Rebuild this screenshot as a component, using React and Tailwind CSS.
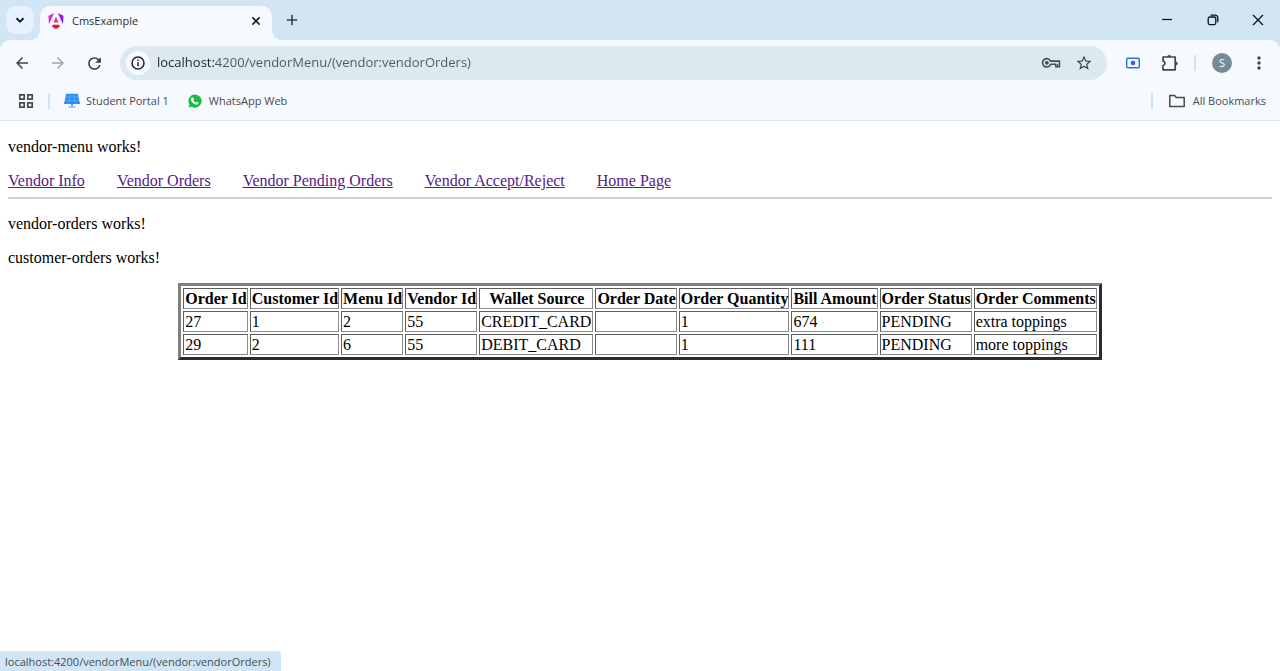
import React from "react";
import { MdArrowBack, MdArrowForward, MdRefresh, MdStarBorder, MdMoreVert } from "react-icons/md";

const links = ["Vendor Info", "Vendor Orders", "Vendor Pending Orders", "Vendor Accept/Reject", "Home Page"];

const columns = [
  "Order Id", "Customer Id", "Menu Id", "Vendor Id", "Wallet Source",
  "Order Date", "Order Quantity", "Bill Amount", "Order Status", "Order Comments",
];

const orders = [
  ["27", "1", "2", "55", "CREDIT_CARD", "", "1", "674", "PENDING", "extra toppings"],
  ["29", "2", "6", "55", "DEBIT_CARD", "", "1", "111", "PENDING", "more toppings"],
];

function AngularLogo() {
  return (
    <svg className="size-4" viewBox="0 0 223 236" aria-hidden="true">
      <defs>
        <linearGradient id="right" x1="0" y1="0" x2="1" y2="1">
          <stop offset="0" stopColor="#b01ff0" />
          <stop offset="1" stopColor="#7a1bee" />
        </linearGradient>
        <linearGradient id="left" x1="0" y1="0" x2="0" y2="1">
          <stop offset="0" stopColor="#c93fe0" />
          <stop offset="1" stopColor="#f0209a" />
        </linearGradient>
      </defs>
      <path fill="url(#right)" d="m222.077 39.192-8.019 125.923L137.387 0l84.69 39.192Z" />
      <path fill="#e4123f" d="m168.972 202.017-57.933 33.056-57.934-33.056 11.783-28.556h92.301l11.783 28.556Z" />
      <path fill="#f0308f" d="m111.039 52 36 88H75l36-88Z" />
      <path fill="url(#left)" d="M7.937 165.115 0 39.192 84.69 0 7.937 165.115Z" />
    </svg>
  );
}

function ChevronIcon() {
  return (
    <svg className="size-4" viewBox="0 0 16 16" fill="none" stroke="#1c2226" strokeWidth="2" aria-hidden="true">
      <path d="m4.5 6.2 3.5 3.5 3.5-3.5" />
    </svg>
  );
}

function CrossIcon() {
  return (
    <svg className="size-4" viewBox="0 0 16 16" fill="none" stroke="#1c2226" strokeWidth="1.7" aria-hidden="true">
      <path d="m4.4 4.4 7.2 7.2m0-7.2-7.2 7.2" />
    </svg>
  );
}

function PlusIcon() {
  return (
    <svg className="size-4" viewBox="0 0 16 16" fill="none" stroke="#37434a" strokeWidth="1.6" aria-hidden="true">
      <path d="M8 2.8v10.4M2.8 8h10.4" />
    </svg>
  );
}

function InfoIcon() {
  return (
    <svg className="size-4" viewBox="0 0 16 16" fill="none" stroke="#1f2427" strokeWidth="1.5" aria-hidden="true">
      <circle cx="8" cy="8" r="6" />
      <path d="M8 7.2v4M8 4.6v1.500" />
    </svg>
  );
}

function KeyIcon() {
  return (
    <svg className="size-5" viewBox="0 0 20 20" fill="none" stroke="#454c50" strokeWidth="1.6" aria-hidden="true">
      <path d="M9.600 8.100h8.800v5.700h-3.600v-2.500H9.700a4.200 4.200 0 1 1-.1-3.200Z" strokeLinejoin="round" />
      <circle cx="5.900" cy="9.800" r="1.900" fill="#454c50" stroke="none" />
      <path d="M16.600 11v2.800" strokeWidth="1" />
    </svg>
  );
}

function CameraIcon() {
  return (
    <svg className="size-4" viewBox="0 0 16 16" aria-hidden="true">
      <rect x="1.7" y="3.2" width="12.6" height="9.6" rx="1.3" fill="#f2f8ff" stroke="#2b71dc" strokeWidth="1.4" />
      <circle cx="8" cy="8" r="2.3" fill="#4c4fd0" />
    </svg>
  );
}

function PuzzleIcon() {
  return (
    <svg className="size-5" viewBox="0 0 20 20" aria-hidden="true">
      <path
        d="M3 4h12.2v12.8H3v-4.2a2.4 2.4 0 0 0 0-4.7Z"
        fill="none" stroke="#3f464b" strokeWidth="1.7" strokeLinejoin="round"
      />
      <path d="M7.2 4a2 2 0 0 1 4 0ZM15.6 8.4a2 2 0 0 1 0 4Z" fill="#3f464b" />
    </svg>
  );
}

function GridIcon() {
  return (
    <svg className="size-4" viewBox="0 0 16 16" fill="none" stroke="#454b50" strokeWidth="1.7" aria-hidden="true">
      <path d="M1.8 1.8h4.4v4.4H1.8zM9.8 1.8h4.4v4.4H9.8zM1.8 9.8h4.4v4.4H1.8zM9.8 9.8h4.4v4.4H9.8z" />
    </svg>
  );
}

function SolarIcon() {
  return (
    <svg className="size-4" viewBox="0 0 16 16" aria-hidden="true">
      <path d="M2.200.8h11.600L16 11H0Z" fill="#2b8cf7" />
      <path d="M1.600 4h12.800M.9 7.400h14.200M5.800 1l-.7 9.800M10.200 1l.7 9.800" stroke="#74b5fb" strokeWidth=".6" />
      <path d="M7 11h2v2.500H7z" fill="#55a5f7" />
      <path d="M4.500 13.200h7v1.600h-7z" fill="#8cc4fb" />
    </svg>
  );
}

function WhatsAppIcon() {
  return (
    <svg className="size-4" viewBox="-0.5 -0.5 17 17" aria-hidden="true">
      <path d="M8 1a7 7 0 1 1-3.4 13.1L1.2 15l.9-3.4A7 7 0 0 1 8 1Z" fill="#17bd45" />
      <path
        d="M5.2 4.3h.9l.8 1.9-.7.9c.6 1.2 1.4 2 2.7 2.6l.9-.8 1.9.9c.1 1.2-.8 2-2 2-3 0-6-2.900-6-5.600 0-1 .6-1.700 1.500-1.900Z"
        fill="#fff"
      />
    </svg>
  );
}

function FolderIcon() {
  return (
    <svg className="size-5" viewBox="0 0 20 20" fill="none" stroke="#454b50" strokeWidth="1.5" aria-hidden="true">
      <path d="M2.800 4.600h4.800l1.700 1.900h7.900v8.900H2.800Z" strokeLinejoin="round" />
    </svg>
  );
}

function TabStrip() {
  return (
    <header className="flex h-10 items-end bg-[#d2e5f4]">
      <button aria-label="Search tabs" className="mb-1.5 ml-1.5 flex size-7 items-center justify-center rounded-[10px] bg-[#e5f2fd]">
        <ChevronIcon />
      </button>
      <div className="relative ml-1.5 flex h-[34px] w-58 items-center rounded-t-[10px] bg-[#f6f9fe] px-2 pb-1">
        <span className="absolute bottom-0 -left-2.5 size-2.5 bg-[radial-gradient(circle_at_0_0,transparent_10px,#f6f9fe_10px)]" />
        <span className="absolute -right-2.5 bottom-0 size-2.5 bg-[radial-gradient(circle_at_100%_0,transparent_10px,#f6f9fe_10px)]" />
        <AngularLogo />
        <span className="ml-2 flex-1 text-[11px] text-[#2a2f33]">CmsExample</span>
        <button aria-label="Close tab"><CrossIcon /></button>
      </div>
      <button aria-label="New tab" className="mb-3 ml-3"><PlusIcon /></button>
      <div className="mb-1 ml-auto flex h-8 items-center">
        <button aria-label="Minimize" className="flex w-[46px] justify-center">
          <svg className="size-4" viewBox="0 0 16 16" stroke="#111" strokeWidth="1.200" aria-hidden="true"><path d="M3 7.500h10" /></svg>
        </button>
        <button aria-label="Restore" className="flex w-[46px] justify-center">
          <svg className="size-4" viewBox="0 0 16 16" fill="none" stroke="#111" strokeWidth="1.300" aria-hidden="true">
            <rect x="3.200" y="5" width="7.600" height="7.600" rx="1.500" />
            <path d="M5.500 3.200h4.800a2.500 2.500 0 0 1 2.500 2.500v4.600" />
          </svg>
        </button>
        <button aria-label="Close window" className="flex w-11 justify-center">
          <svg className="size-4" viewBox="0 0 16 16" stroke="#111" strokeWidth="1.300" aria-hidden="true"><path d="m3 3 10 10M13 3 3 13" /></svg>
        </button>
      </div>
    </header>
  );
}

function Toolbar() {
  return (
    <div className="flex h-[46px] items-center pr-[11px] pl-1">
      <button aria-label="Back" className="flex w-9 justify-center text-[#3d464b]"><MdArrowBack size={18} /></button>
      <button aria-label="Forward" className="flex w-9 justify-center text-[#a0a6aa]"><MdArrowForward size={18} /></button>
      <button aria-label="Reload" className="flex w-9 justify-center text-[#353d42]"><MdRefresh size={19} /></button>
      <div className="ml-2 flex h-[34px] flex-1 items-center rounded-full bg-[#dde9f1] pl-1.5 pr-3.5">
        <button aria-label="Site information" className="flex size-6 items-center justify-center rounded-full bg-[#f6f9fe]"><InfoIcon /></button>
        <input
          aria-label="Address"
          defaultValue="localhost:4200/vendorMenu/(vendor:vendorOrders)"
          className="ml-[7px] min-w-0 flex-1 bg-[linear-gradient(to_right,#1f2427_58px,#4d565b_58px)] bg-clip-text text-[13px] text-transparent outline-none"
        />
        <button aria-label="Passwords"><KeyIcon /></button>
        <button aria-label="Bookmark this page" className="ml-3.5 text-[#3f464b]"><MdStarBorder size={18} /></button>
      </div>
      <button aria-label="Screen recorder" className="ml-[18px]"><CameraIcon /></button>
      <button aria-label="Extensions" className="ml-[19px]"><PuzzleIcon /></button>
      <span className="ml-3.5 h-4 w-0.5 bg-[#cfe4f5]" />
      <button aria-label="Profile" className="ml-4 flex size-5 items-center justify-center rounded-full bg-[#748c98] text-[11px] text-white">S</button>
      <button aria-label="Menu" className="ml-[17px] text-[#3f464b]"><MdMoreVert size={20} /></button>
    </div>
  );
}

function BookmarksBar() {
  return (
    <nav aria-label="Bookmarks" className="flex h-[35px] items-center border-b border-[#dfe6ea] pr-3.5 pb-1 pl-[18px] text-[11px] text-[#454c51]">
      <button aria-label="Apps"><GridIcon /></button>
      <span className="ml-3.5 h-4 w-0.5 bg-[#cfe4f5]" />
      <a href="#portal" className="ml-3.5 flex items-center gap-1.5"><SolarIcon />Student Portal 1</a>
      <a href="#whatsapp" className="ml-[18px] flex items-center gap-1.5"><WhatsAppIcon />WhatsApp Web</a>
      <span className="ml-auto h-4 w-0.5 bg-[#cfe4f5]" />
      <button className="ml-3.5 flex items-center gap-1.5"><FolderIcon />All Bookmarks</button>
    </nav>
  );
}

const cellBorder = "border border-t-[#5c5c5c] border-r-[#8a8a8a] border-b-[#8a8a8a] border-l-[#5c5c5c]";

function OrdersTable() {
  return (
    <table className="mx-auto mt-4 border-separate border-spacing-0.5 border-3 border-[gray] [border-style:outset]">
      <thead>
        <tr>
          {columns.map((name) => (
            <th key={name} scope="col" className={`${cellBorder} h-[21px] py-px pl-px text-center leading-[17px] font-bold whitespace-nowrap`}>{name}</th>
          ))}
        </tr>
      </thead>
      <tbody>
        {orders.map((row) => (
          <tr key={row[0]}>
            {row.map((value, i) => (
              <td key={columns[i]} className={`${cellBorder} h-[21px] p-px leading-[17px] whitespace-nowrap`}>{value}</td>
            ))}
          </tr>
        ))}
      </tbody>
    </table>
  );
}

export default function App() {
  return (
    <div className="min-h-screen bg-white">
      <div className="bg-[#d2e5f4] font-['Open_Sans',sans-serif]">
        <TabStrip />
        <div className="rounded-t-[10px] bg-[#f6f9fe]">
          <Toolbar />
          <BookmarksBar />
        </div>
      </div>
      <main className="px-2 pt-[17px] font-['Liberation_Serif',serif] text-base leading-[18px] text-black">
        <p>vendor-menu works!</p>
        <nav aria-label="Vendor" className="mt-4 flex gap-8 text-[#551a8b]">
          {links.map((label) => (
            <a key={label} href="#vendor" className="underline">{label}</a>
          ))}
        </nav>
        <hr className="mt-[7px] border-t-2 border-[#d0d0d0]" />
        <p className="mt-4">vendor-orders works!</p>
        <p className="mt-4">customer-orders works!</p>
        <OrdersTable />
      </main>
      <div role="status" className="fixed bottom-0 left-0 rounded-tr bg-[#d2e5f4] pt-0.5 pr-2.5 pl-[5px] font-['Open_Sans',sans-serif] text-[11px] leading-[18px] text-[#454f56]">
        localhost:4200/vendorMenu/(vendor:vendorOrders)
      </div>
    </div>
  );
}
